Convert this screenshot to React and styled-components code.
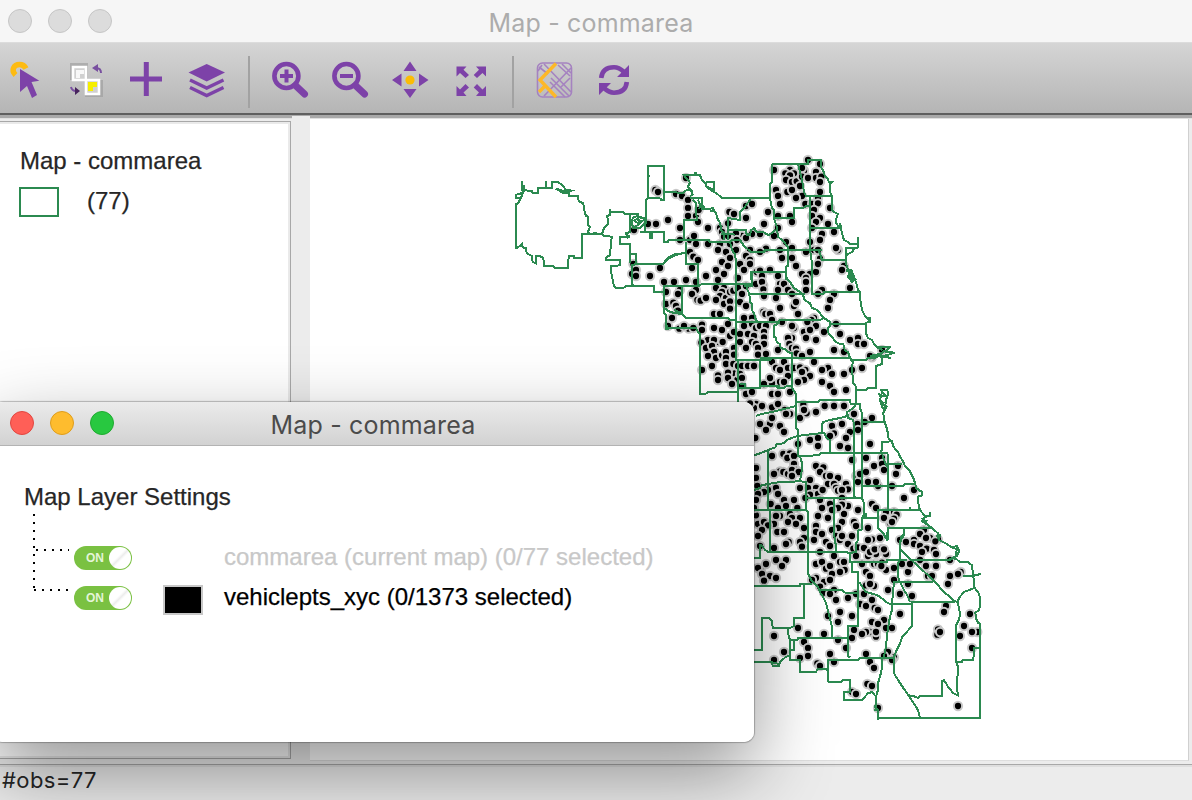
import React from "react";
import styled, { createGlobalStyle } from "styled-components";

const GlobalStyle = createGlobalStyle`
  * { box-sizing: border-box; }
  body { margin: 0; background: #fff; overflow: hidden; }
`;

const Desktop = styled.div`
  position: relative;
  width: 1192px;
  height: 800px;
  overflow: hidden;
  display: flex;
  flex-direction: column;
  background: #ececec;
  font-family: "Liberation Sans", Arial, sans-serif;
  color: #262626;
`;

const TitleBar = styled.header`
  display: grid;
  grid-template-columns: 130px 1fr 130px;
  align-items: center;
  flex: none;
  height: ${(p) => (p.$active ? 44 : 43)}px;
  padding-left: ${(p) => (p.$active ? 17 : 8)}px;
  padding-bottom: ${(p) => (p.$active ? 1 : 0)}px;
  background: ${(p) => (p.$active ? "linear-gradient(#ebebeb, #d2d2d2)" : "#f6f6f6")};
  border-bottom: 1px solid ${(p) => (p.$active ? "#b3b3b3" : "#dcdcdc")};
`;

const Lights = styled.div`
  display: flex;
  gap: 16px;
`;

const Light = styled.i`
  width: 24px;
  height: 24px;
  border-radius: 50%;
  background: ${(p) => p.$fill};
  border: 1px solid ${(p) => p.$edge};
`;

const Title = styled.h1`
  margin: 0;
  text-align: center;
  white-space: nowrap;
  font: 400 25px/30px Inter, sans-serif;
  letter-spacing: 0.18px;
  color: ${(p) => (p.$active ? "#4b4b4b" : "#acacac")};
  position: relative;
  left: ${(p) => p.$shift || 0}px;
  top: 2px;
`;

const Toolbar = styled.nav`
  display: flex;
  flex: none;
  height: 76px;
  margin-left: -4px;
  background: linear-gradient(#d5d5d5, #b5b5b5 70px, #5f5f5f 70px, #5f5f5f 72px, #a9a9a9 72px, #a9a9a9 75px, #e0e0e0 75px);
`;

const Tool = styled.button`
  width: 60px;
  height: 70px;
  padding: 0;
  border: 0;
  background: none;
  svg { display: block; }
`;

const Separator = styled.span`
  width: 24px;
  height: 52px;
  margin-top: 13px;
  padding-left: 2px;
  display: flex;
  justify-content: center;
  &::before { content: ""; width: 2px; background: #a2a2a2; }
`;

const Workspace = styled.main`
  display: flex;
  flex: none;
  height: 645px;
`;

const Legend = styled.aside`
  width: 291px;
  height: 638px;
  margin-top: 2px;
  padding: 23px 0 0 19px;
  background: #fff;
  border: 1px solid #a8a8a8;
  border-left: 0;
  box-shadow: inset -2px 2px #eaeaea, inset 0 -2px #eaeaea;
`;

const Label = styled.div`
  font-size: 24px;
  line-height: 32px;
  white-space: nowrap;
  letter-spacing: ${(p) => p.$spacing || 0}px;
  padding: ${(p) => p.$pad || 0};
  color: ${(p) => p.$color || "#262626"};
  -webkit-text-stroke: 0.25px currentColor;
`;

const LegendRow = styled.div`
  display: flex;
  align-items: flex-start;
  gap: 28px;
  padding-top: 8px;
`;

const Swatch = styled.span`
  flex: none;
  width: 40px;
  height: 30px;
  margin-top: ${(p) => p.$drop || 0}px;
  background: ${(p) => p.$fill};
  border: 2px solid ${(p) => p.$edge};
`;

const Splitter = styled.div`
  width: 18px;
  margin-top: -3px;
  margin-left: 1px;
  background: #ececec;
`;

const Canvas = styled.section`
  width: 879px;
  height: 642px;
  background: #fff;
  border-right: 1px solid #d0d0d0;
  border-bottom: 1px solid #dedede;
  svg { display: block; }
`;

const StatusBar = styled.footer`
  flex: 1;
  border-top: 1px solid #a8a8a8;
  box-shadow: inset 0 2px #dedede;
  padding-left: 2px;
  font: 400 22px/30px Inter, sans-serif;
  letter-spacing: 0.4px;
`;

const Dialog = styled.section`
  position: absolute;
  left: -7px;
  top: 402px;
  width: 761px;
  height: 340px;
  border-radius: 10px;
  background: #fff;
  overflow: hidden;
`;

const DialogShadow = styled.div`
  position: absolute;
  left: -7px;
  top: 402px;
  width: 761px;
  height: 340px;
  border-radius: 10px;
  box-shadow: 0 0 1px 1px rgba(0, 0, 0, 0.25), 0 30px 78px rgba(0, 0, 0, 0.42);
`;

const DialogBody = styled.div`
  padding: 35px 0 0 31px;
`;

const Tree = styled.div`
  display: grid;
  grid-template-columns: 50px 89px 61px 1fr;
  grid-template-rows: 40px 40px;
  align-items: center;
  padding-top: 25px;
  position: relative;
`;

const Branches = styled.svg`
  position: absolute;
  left: 0;
  top: 0;
`;

const Switch = styled.span`
  grid-column: 2;
  display: flex;
  align-items: center;
  justify-content: flex-end;
  gap: 5px;
  width: 58px;
  height: 24px;
  border-radius: 12px;
  background: #7ac142;
  color: #e4f5d8;
  font: 700 12px "Liberation Sans", sans-serif;
  &::after {
    content: "";
    width: 22px;
    height: 22px;
    margin-right: 1px;
    border-radius: 50%;
    background: linear-gradient(135deg, #fff 42%, #ededed 50%, #fff 58%);
  }
`;

const purple = "#7d42a8";

const Magnifier = ({ plus }) => (
  <svg width="60" height="70" fill="none" stroke={purple}>
    <circle cx="26.4" cy="33" r="12" strokeWidth="4.6" />
    <path d="M35.5 42.5L44.5 51" strokeWidth="7" strokeLinecap="round" />
    <path d={plus ? "M20 33H33M26.5 26.5V39.5" : "M20 33H33"} strokeWidth="4" />
  </svg>
);

const icons = {
  select: (
    <svg width="60" height="70">
      <path d="M19.5 32C14.5 27 18 21.5 23.5 21.5Q28 21.5 30 25.5" fill="none" stroke="#fdbb12" strokeWidth="5.4" />
      <path d="M24 26L43.3 37.8L35.5 39L41 52L36 55L31 43L24 49Z" fill={purple} />
    </svg>
  ),
  invert: (
    <svg width="60" height="70">
      <path d="M14 20H32V37H14ZM29 37H47V54H29Z" fill="#999" opacity=".6" />
      <path d="M17 24H30V37H17ZM30 37H43V51H30Z" fill="#d0d0d0" stroke="#fff" strokeWidth="2.6" />
      <path d="M20 27H28V31H24V35H20Z" fill="#f8f8f8" />
      <path d="M32 39H41V44H37V48H32Z" fill="#f5ee00" />
      <path d="M45 30Q45 25 40 25M15 44Q16 48 20 48" fill="none" stroke="#7950a0" strokeWidth="2" />
      <path d="M36 25L42 21V29Z" fill="#7950a0" />
      <path d="M24 48L19 44V52Z" fill="#48245e" />
    </svg>
  ),
  add: (
    <svg width="60" height="70" stroke={purple} strokeWidth="5">
      <path d="M14 36H46M30.3 19V53" />
    </svg>
  ),
  layers: (
    <svg width="60" height="70" fill={purple}>
      <path d="M30.7 21L49 29.5L30.7 38.5L12.5 29.5Z" />
      <path d="M14 37L30.7 45L47.5 37M14 44.5L30.7 52.5L47.5 44.5" fill="none" stroke={purple} strokeWidth="3.4" />
    </svg>
  ),
  zoomIn: <Magnifier plus />,
  zoomOut: <Magnifier />,
  pan: (
    <svg width="60" height="70" fill={purple}>
      <circle cx="30" cy="37" r="4.6" fill="#fbbc05" />
      <path d="M30 18.5L36.5 28H23.5ZM30 55L36.5 46H23.5ZM12 37L21.5 30.5V43.5ZM48.5 37L39 30.5V43.5Z" />
    </svg>
  ),
  extent: (
    <svg width="60" height="70" fill={purple}>
      <path d="M16.5 23.5H26.5L23.5 26.7L29 32L25.5 35L20 30L16.5 33.5ZM46 23.5H36L39 26.7L33.7 32L37 35L42.5 30L46 33.5ZM16.5 53H26.5L23.5 49.5L29 44.5L25.5 41L20 46.5L16.5 43ZM46 53H36L39 49.5L33.7 44.5L37 41L42.5 46.5L46 43Z" />
    </svg>
  ),
  basemap: (
    <svg width="60" height="70" fill="none" stroke="#a582c0" strokeWidth="1.6">
      <rect x="13.5" y="20" width="34" height="34" rx="5" />
      <path d="M20 21L47 49M27 35L45 53M47 25L20 53M34 22L46 33M38 21L47 30M26 39L41 54M36 45L46 35M18 22L14 28M15 24L24 31" />
      <path d="M32 20.5L16 37L32 54" stroke="#fdb827" strokeWidth="3.4" />
      <path d="M22 42L15 49" stroke="#fdb827" strokeWidth="3.4" />
    </svg>
  ),
  refresh: (
    <svg width="60" height="70" fill="none" stroke={purple} strokeWidth="4.6">
      <path d="M17.2 35C18 27 23 24.3 30 24.3Q35 24.3 40 29M42.8 39C42 47 37 49.7 30 49.7Q25 49.7 20 45" />
      <path d="M45 22V34H33ZM15 52V40H27Z" fill={purple} stroke="none" />
    </svg>
  ),
};

// Community outlines, one survey tile at a time. Coordinates are thirds of a
// pixel from the tile's origin; "lines" are open polylines.
const tiles = [
  {
    x: 500, y: 140,
    lines: [
      "66,124 68,160 62,176 54,190 48,192 48,324 54,322 66,312 68,322 78,324 80,340 96,348 98,366 108,370 108,348 118,348 130,354 132,378 158,378 164,384 204,384 206,348 222,348 222,354 246,354 246,282 306,282",
      "62,176 48,174 48,164 60,162 74,152 70,134 70,150 96,154 98,160 114,160 114,144 156,144 156,126 174,126 190,138 196,148 214,152 202,156 168,146 190,160 206,160 206,168 234,168 236,184 250,190 252,208 258,228 264,230 264,256 270,260 264,276 270,282",
      "138,124 138,144", "280,278 290,278",
      "306,282 312,264 324,252 322,228 330,224 330,208 330,216 368,216 374,222 416,222",
      "306,282 312,288 336,290 334,300 330,346 320,350 318,360 360,360 360,376 334,378 332,390 336,410 342,438 348,444 370,444 378,438 462,438 462,456 492,456",
      "390,222 390,276 378,280 384,292 390,286", "390,290 360,290 360,312 390,312 390,342 408,342 408,372 396,376 396,432 404,438", "390,342 390,370",
      "408,372 490,372 506,356 530,344 558,338", "400,264 394,246 400,232 412,228 430,236 436,246 420,264 402,264 436,236 418,230 404,242 414,250 422,242 410,238", "436,246 434,276",
    ],
    dots: "402,270 396,402 400,372 408,390 408,408",
  },
  {
    x: 640, y: 140,
    lines: [
      "60,174 24,174 24,78 72,78 72,180 64,180 60,174", "24,108 30,108", "24,174 18,180 18,240 14,276",
      "72,156 100,156 130,160 136,152 152,148 158,164 150,168", "180,106 132,106 150,128 144,140 158,156",
      "164,106 180,106 186,120 196,130 200,142 216,152 232,162 246,174 394,174", "198,126 222,126 222,150 206,142 198,138 198,126", "164,96 164,106 168,106 168,96",
      "150,174 186,174 186,206 206,208 218,204 228,220 234,240 240,248 244,270 252,280 252,300", "158,180 168,190 170,240 132,240 132,300", "174,178 180,194 178,206", "210,212 222,212 218,206", "188,196 194,206",
      "0,276 72,276 72,306 84,306 86,300 206,300 210,306 270,306 276,300 300,300 312,318 326,330 334,336 372,336 380,330 396,330",
      "30,276 30,294 36,294 36,276", "264,300 264,234 300,240 300,216 312,204 322,190 330,180 330,174",
      "264,270 318,270 320,286 330,286 334,270 342,264 350,276 370,276 386,286 406,270", "242,282 264,282 286,284", "318,280 332,286",
      "270,306 276,330 284,342 288,360 288,420", "138,306 138,372 174,372 174,438", "0,372 68,372 84,354 100,344 138,338", "334,420 334,396 438,396",
    ],
    dots: "46,150 54,156 84,240 24,252 48,252 120,264 120,300 138,114 108,162 126,168 144,180 144,204 144,228 168,228 176,210 174,246 204,264 150,300 162,288 168,312 150,336 160,350 174,360 204,312 240,312 234,330 258,336 246,366 270,354 264,378 228,390 252,402 198,408 156,384 60,384 30,408 240,264 246,276 252,290 264,250 268,216 282,222 318,234 318,198 336,192 384,216 372,252 360,282 336,282 306,288 318,294 288,280 290,300 288,330 264,288 270,312 378,326 330,330 360,336 318,348 330,360 300,372 330,372 312,390 350,396 360,392 366,408 390,390 294,414",
  },
  {
    x: 750, y: 140,
    lines: [
      "66,72 174,72 174,60 212,60 212,80 222,96 224,108 234,116 236,126 246,126 240,132 240,156 246,168 246,210 252,216 264,222 260,230 258,248 264,258 272,258 276,280 282,300 294,306 300,312 324,312 324,292 324,322 314,324 306,336 294,342 288,346",
      "324,324 288,324 288,360 216,360 210,340 204,330", "288,360 290,380 300,396 306,420", "288,390 304,390 310,410 296,400 312,418",
      "144,72 150,96 156,120 162,156 168,168 246,168", "180,168 180,330 186,370 186,420", "74,234 132,234 132,204 160,204 168,198 180,198", "180,264 270,264",
      "66,72 66,126 60,132 60,174 66,204 72,210 72,234 80,260 84,290 102,306 114,322 114,378 108,380 108,420", "0,336 40,336 46,330 216,330", "270,250 274,262 264,262",
    ],
    dots: "72,90 120,90 106,100 132,100 120,106 108,120 126,126 140,124 150,138 162,92 156,84 174,60 210,72 198,96 156,110 174,114 198,114 214,110 210,126 78,150 84,168 112,156 126,150 90,192 156,168 138,174 84,228 120,228 126,246 84,264 72,288 108,306 126,324 90,330 96,354 126,354 138,378 156,402 180,402 198,396 210,356 204,372 166,192 186,192 204,174 204,190 192,210 186,228 210,234 198,246 234,252 240,204 210,156 186,264 216,282 210,300 252,276 180,306 192,330 204,330 168,336 264,330 258,324 282,378 276,390 84,408 168,414",
  },
  {
    x: 650, y: 260,
    lines: [
      "150,78 42,78 42,160 48,164 48,208 54,208 54,204 138,204 144,216 150,222 150,402 166,402 174,396 264,396", "42,78 144,78 156,72 306,72", "96,78 96,162",
      "42,144 60,156 80,160 96,162 108,174 234,174 240,180 258,180", "258,0 258,300 264,300 264,426", "258,186 390,186", "264,300 360,300 366,294 390,294",
      "330,300 330,384 264,384", "330,378 390,378", "288,72 290,84 298,102 300,126 306,132 306,150 312,160 318,180 322,186", "298,102 390,102", "306,36 306,78 282,78",
      "270,372 286,372 286,384", "48,194 56,208", "72,150 94,158",
    ],
    dots: "42,66 72,66 108,60 138,66 138,90 126,102 48,96 90,90 84,102 48,132 70,128 78,138 84,152 66,174 54,198 88,206 116,206 102,198 130,204 142,120 152,122 168,114 192,162 210,162 204,60 198,84 222,84 216,96 210,108 198,120 228,114 222,132 240,96 240,124 240,146 250,92 234,192 216,210 192,204 156,194 156,210 240,228 252,216 174,240 206,246 218,246 192,240 154,248 168,264 186,258 192,276 174,288 198,294 216,286 228,276 252,264 252,284 228,294 228,312 250,312 186,318 156,330 204,346 204,360 254,340 234,338 234,354 262,360 246,372 264,84 288,78 276,102 270,126 288,138 318,72 340,76 336,66 340,88 342,108 306,174 282,174 340,156 346,162 360,162 366,180 306,192 282,198 270,222 270,246 294,222 318,204 312,228 330,198 348,198 342,216 306,246 318,252 288,264 342,232 342,252 324,264 324,284 348,282 264,318 276,318 294,318 312,318 270,342 276,354 276,378 342,372 360,354 288,402 306,396",
  },
  {
    x: 760, y: 270,
    lines: [
      "0,6 78,6 80,24 90,36 102,54 120,66 130,78 134,90 150,100 156,114 172,120 186,138 192,144 210,156 210,168 204,174 206,192 216,200 222,210 234,220 250,222 254,240 264,246 270,264 278,276 276,300 280,340 288,350 288,402",
      "0,72 134,72", "156,0 156,72 190,72 192,66 298,66",
      "258,0 270,8 264,20 276,36 286,28 270,20 278,10 288,36 294,60 300,66 300,84 306,120 312,132 318,142 330,150 318,160 318,190 324,204 336,210 342,222 354,234 366,240", "320,144 330,144 330,156 320,156",
      "330,258 360,252 372,244 404,248 380,256 350,260 330,260", "366,240 360,232 390,230 376,246", "366,264 362,258 392,264 356,254", "366,264 366,282 348,288 348,354 324,354 318,360 288,360",
      "210,162 318,162", "0,156 56,156 60,150 180,150 192,144", "60,156 42,168 42,200 48,204 50,216 60,222 62,234 76,238 84,246 96,250 96,354", "0,264 270,264", "276,270 318,270 324,264 348,264",
      "0,270 0,348 50,348 54,354 72,354 80,348 96,348", "96,354 108,372 108,396", "108,396 174,396 180,390 270,390",
      "360,360 382,360 384,372 378,390", "356,370 362,380 378,378 366,366 360,390 372,400",
    ],
    dots: "60,42 72,42 48,84 54,60 84,60 96,72 138,36 138,60 102,108 108,96 60,114 114,132 186,60 174,72 222,72 210,90 204,114 270,54 66,156 102,174 96,168 162,144 154,150 142,156 168,168 132,186 150,180 192,186 228,162 138,204 168,210 96,204 84,204 240,192 270,210 294,204 294,222 312,222 54,240 88,222 96,234 108,236 110,250 126,258 150,246 222,240 252,246 336,262 330,258 366,240 72,288 72,276 36,276 48,294 60,300 84,294 84,318 60,336 72,336 36,340 30,324 102,294 120,292 136,300 126,306 150,318 132,330 114,336 162,276 204,294 186,300 216,312 252,312 276,300 306,294 186,336 210,348 222,366 258,360 36,372 54,372 90,366",
  },
  {
    x: 740, y: 400,
    lines: [
      "48,48 64,42 96,36 120,30 160,20 168,18", "168,0 168,84 174,90 174,168 236,166 242,160 444,160", "168,6 234,6 240,0 330,0 332,12 360,12 360,24 366,40 366,294",
      "348,12 340,24 322,36 322,48 300,54 270,60 250,66 246,72 246,100 254,100 260,114 270,120 270,160", "348,12 348,0", "322,36 324,54 340,60 342,80 342,290 348,290",
      "42,166 60,160 84,150 106,142 110,132 130,130 140,120 156,114 172,108 204,104 240,100 246,100", "84,150 84,330",
      "180,168 186,190 186,204 184,220 180,244 120,246 84,252 64,256 60,264 42,270", "180,244 198,246 198,330 204,336 204,480", "198,294 366,294",
      "366,66 434,66", "420,0 426,20 434,30 438,0", "426,10 440,20 430,38 432,60 440,84 444,100 446,118 456,124 460,140 474,156 480,170 490,186 496,200 510,214 520,234 526,252 528,264 546,276 546,286 534,290 536,318 540,330",
      "454,124 426,126 426,148 420,160", "426,160 432,180 438,194 444,200", "438,192 486,192", "444,162 444,330", "366,258 490,258 496,252 526,252",
      "366,294 372,310 372,354 414,354", "372,342 378,342 378,354", "540,330 414,330 414,384 430,400 440,418 444,384 576,384", "510,322 510,330",
      "42,330 198,330", "90,330 90,456", "60,432 76,450 84,456 320,456 330,462", "282,294 282,400 288,440 288,456", "366,354 366,388 354,392 354,420 348,430 348,456 320,460", "372,342 366,354", "492,384 492,400 482,414 480,450", "444,384 444,420",
    ],
    dots: "48,12 42,24 66,18 30,10 96,22 114,12 134,30 150,42 138,42 60,72 90,72 96,54 78,90 120,78 132,96 46,114 180,54 190,14 200,40 192,30 228,36 254,18 282,18 312,18 342,42 396,54 276,78 306,72 330,96 318,114 282,100 270,108 374,66 352,72 354,90 300,138 324,144 336,180 210,120 234,114 234,138 174,132 390,132 96,168 130,162 150,160 142,174 162,168 162,192 120,214 102,222 130,216 144,222 168,210 156,210 176,216 156,228 48,204 48,234 52,258 180,264 132,300 162,300 108,264 114,282 84,270 72,276 54,282 48,300 92,312 114,324 138,318 172,324 228,198 250,202 240,216 258,228 270,228 294,234 264,252 282,252 318,252 210,240 228,264 204,264 222,282 234,282 248,270 210,284 196,294 288,264 294,272 324,268 306,270 306,294 240,300 348,228 354,246 360,222 378,216 384,246 414,258 408,246 378,174 402,198 426,174 426,192 432,210 474,198 468,222 456,258 522,270 492,294 396,312 408,324 324,318 306,314 312,342 294,324 354,330 246,324 270,312 276,330 234,348 264,354 342,366 348,378 384,384 306,366 294,384 276,390 228,378 228,396 222,420 246,402 258,426 270,438 288,408 300,420 306,408 336,408 324,432 340,446 396,418 384,420 420,414 354,442 372,444 120,348 108,348 150,342 156,354 180,354 144,366 168,372 192,384 102,372 54,372 72,366 48,346 84,376 66,390 54,408 112,396 132,396 146,426 138,432 192,414 180,426 186,440 102,444 60,438 42,324",
  },
  {
    x: 740, y: 540,
    lines: [
      "60,12 60,54 42,54", "204,36 204,100 216,124 234,140 240,156 250,172 258,190 264,214 270,236 276,260 276,290", "216,132 180,132 180,138 42,138",
      "192,132 192,234 162,234 162,258 150,264 98,264 96,242 86,234 66,234 66,330 42,330", "144,264 144,280 150,300 150,360 180,360 180,396 228,396 232,388 260,388 264,396",
      "42,366 96,366 98,378 116,378 120,366 138,350 150,348", "162,300 162,330 150,330", "100,368 118,372", "150,300 172,300 174,294 324,294", "240,150 306,150 318,160 354,160",
      "330,36 330,66 336,66 336,96 354,96 354,258 324,258 324,348 330,352", "354,126 360,130 378,156 400,162 416,168 430,178 444,190 456,192",
      "336,66 440,66 442,60 500,60", "456,192 516,192 516,186 646,186", "456,192 456,210 450,230 444,264 440,300 436,330 432,350", "456,192 462,126 580,126",
      "480,0 480,60 474,70 474,110 480,126 492,150 504,170 510,186", "480,28 510,56 540,84 580,120 610,154 640,180 650,186",
      "510,60 630,60 640,54 650,58 660,66 684,66 696,76 704,144 672,156 660,170 652,186 656,200 660,220 658,236 648,256 648,366 654,380 652,420 650,440 654,466 640,460 624,440 612,420 606,424 606,468 540,468 534,474 520,468 506,466",
      "668,108 698,108 722,102", "704,144 718,162 720,186 718,210 706,218 710,240 720,252 720,534 414,534 414,540", "706,230 714,250", "648,366 666,366 668,360 700,360 702,324 720,324",
      "516,192 516,258 500,276 486,292 480,310 470,330 462,350 462,400 474,420 490,444 508,470 524,494 534,510 540,534", "264,426 264,360 354,360 360,354 462,354",
      "264,426 304,426 308,420 330,420 330,456 312,456 312,480 366,480 384,460 396,456 408,470 408,504 414,510 414,534", "402,496 410,510 402,510", "426,354 426,384 420,410 414,430 414,450 408,470",
    ],
    dots: "240,36 282,48 300,66 312,66 348,48 384,48 408,42 438,42 228,72 246,66 258,86 270,78 276,102 314,90 300,96 252,126 270,120 228,114 216,120 240,140 282,150 252,158 270,162 288,180 324,174 348,162 372,162 360,192 378,198 396,180 366,72 378,96 390,108 378,136 402,138 390,132 402,72 414,72 426,68 424,80 438,90 462,84 462,120 444,150 480,162 516,168 504,132 504,96 486,72 510,72 480,222 404,204 414,210 396,246 432,240 414,252 438,264 456,264 390,276 408,290 408,276 378,276 366,282 342,270 336,294 336,228 300,216 294,246 264,228 294,300 318,324 252,282 270,342 282,366 204,282 174,264 192,306 204,324 204,348 180,354 102,288 132,336 102,360 232,370 240,378 378,342 390,366 402,384 382,432 396,438 336,456 348,462 414,504 444,336 432,348 462,352 456,360 654,498 618,198 612,216 690,222 672,258 660,288 712,276 696,276 696,324 594,268 592,284 600,276 108,60 138,60 126,78 62,90 78,72 54,84 66,102 90,108 108,114 72,122",
  },
  {
    x: 860, y: 450,
    lines: [
      "180,180 196,200 186,214 200,222 216,234 234,250 236,270 254,278 276,292 290,288 298,304 290,318 266,330", "210,186 210,198 196,200", "186,204 196,220 200,212 188,212", "228,258 240,256 236,270", "276,292 290,298 288,320",
      "132,234 132,256 122,270 120,300",
    ],
    dots: "30,306 44,298 66,296 72,298 120,270 138,276 162,270 162,282 180,288 192,240 180,252 210,264 198,264 200,296 186,306 222,300 228,312 234,268 226,274 180,330 270,330 198,348 228,348 204,378 216,378 270,378 302,366 294,372 264,402 126,342 150,342 64,348 78,186 102,186 110,194 102,206 72,204 90,220 96,216",
  },
];

const points = (s) => s.split(" ").map((p) => p.split(",").map(Number));
// Places a tile inside the canvas, whose top-left corner is at (310, 119).
const place = (t) => `translate(${t.x - 310} ${t.y - 119}) scale(${1 / 3})`;

const CityMap = () => (
  <svg width="878" height="641">
    {tiles.map((t, i) => (
      <g key={i} transform={place(t)}>
        {points(t.dots).map(([x, y], j) => (
          <circle key={j} cx={x} cy={y} r="12.4" fill="#000" stroke="#c8c8c8" strokeWidth="6" />
        ))}
      </g>
    ))}
    {tiles.map((t, i) => (
      <g key={i} transform={place(t)} fill="none" stroke="#2b8a50" strokeWidth="6" shapeRendering="crispEdges">
        {t.lines.map((l, j) => <polyline key={j} points={l} />)}
      </g>
    ))}
  </svg>
);

const idle = ["#dcdcdc", "#c6c6c6"];
const TrafficLights = ({ colors }) => (
  <Lights>{colors.map(([f, e], i) => <Light key={i} $fill={f} $edge={e} />)}</Lights>
);

const groups = [["select", "invert", "add", "layers"], ["zoomIn", "zoomOut", "pan", "extent"], ["basemap", "refresh"]];

export default function App() {
  return (
    <Desktop>
      <GlobalStyle />
      <TitleBar>
        <TrafficLights colors={[idle, idle, idle]} />
        <Title $shift={-9}>Map - commarea</Title>
      </TitleBar>
      <Toolbar>
        {groups.map((g, i) => (
          <React.Fragment key={i}>
            {i > 0 && <Separator />}
            {g.map((name) => <Tool key={name} aria-label={name}>{icons[name]}</Tool>)}
          </React.Fragment>
        ))}
      </Toolbar>
      <Workspace>
        <Legend>
          <Label $pad="0 0 0 1px">Map - commarea</Label>
          <LegendRow>
            <Swatch $fill="#fff" $edge="#2b8a50" $drop={2} />
            <Label>(77)</Label>
          </LegendRow>
        </Legend>
        <Splitter />
        <Canvas><CityMap /></Canvas>
      </Workspace>
      <StatusBar>#obs=77</StatusBar>
      <DialogShadow />
      <Dialog>
        <TitleBar $active>
          <TrafficLights colors={[["#ff5f57", "#e2463f"], ["#febc2e", "#df9d1b"], ["#28c840", "#1fab30"]]} />
          <Title $active $shift={-9}>Map - commarea</Title>
        </TitleBar>
        <DialogBody>
          <Label>Map Layer Settings</Label>
          <Tree>
            <Branches width="50" height="90" fill="none" stroke="#000" strokeWidth="2" strokeDasharray="2 6">
              <path d="M10 1V78M12 37H45M10 77H45" />
            </Branches>
            <Switch>ON</Switch>
            <span />
            <Label $color="#c8c8c8" $pad="0 0 2px">commarea (current map) (0/77 selected)</Label>
            <Switch>ON</Switch>
            <Swatch $fill="#000" $edge="#c8c8c8" $drop={4} />
            <Label $color="#000" $pad="0 0 2px">vehiclepts_xyc (0/1373 selected)</Label>
          </Tree>
        </DialogBody>
      </Dialog>
    </Desktop>
  );
}
